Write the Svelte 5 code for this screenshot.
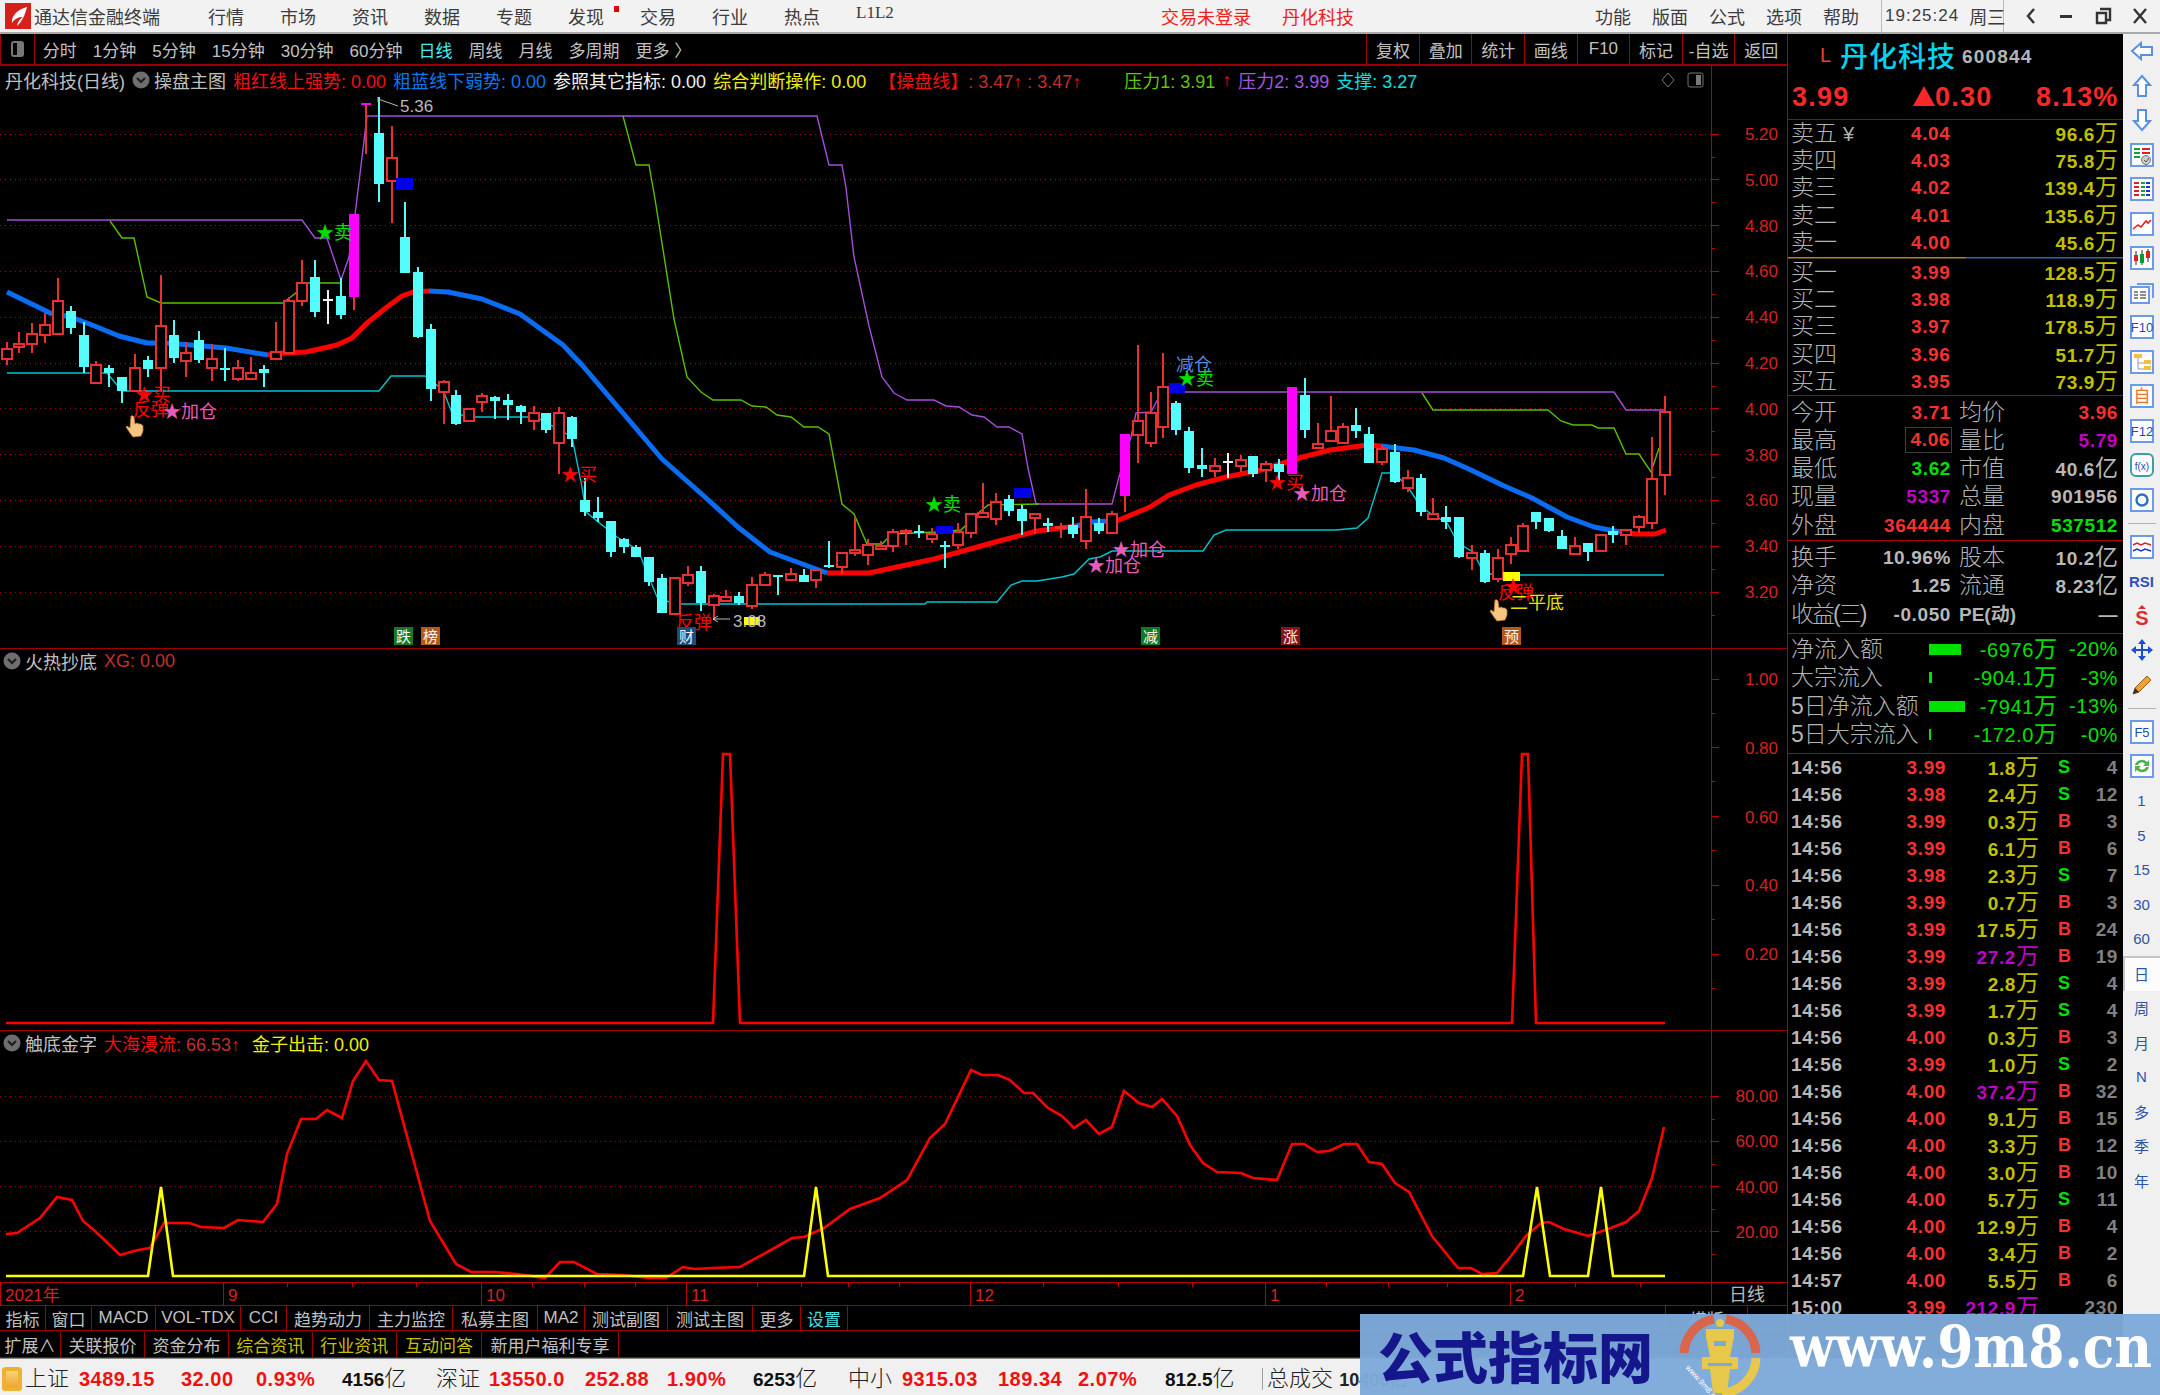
<script>
	const menu = ['行情', '市场', '资讯', '数据', '专题', '发现', '交易', '行业', '热点'];
	const sysMenu = ['功能', '版面', '公式', '选项', '帮助'];
	const periods = ['分时', '1分钟', '5分钟', '15分钟', '30分钟', '60分钟', '日线', '周线', '月线', '多周期', '更多 〉'];
	const tools = ['复权', '叠加', '统计', '画线', 'F10', '标记', '-自选', '返回'];

	const tabsA = [
		['指标', 46], ['窗口', 46], ['MACD', 64], ['VOL-TDX', 85], ['CCI', 46], ['趋势动力', 83], ['主力监控', 83],
		['私募主图', 85], ['MA2', 47], ['测试副图', 83], ['测试主图', 85], ['更多', 48], ['设置', 47]
	];
	const tabsB = [
		['扩展∧', 61, ''], ['关联报价', 84, ''], ['资金分布', 84, ''], ['综合资讯', 83.5, 'gold'],
		['行业资讯', 84.5, 'gold'], ['互动问答', 85, 'gold'], ['新用户福利专享', 137, '']
	];

	// kind, high, body top, body bottom, low (screen y)
	const candles = [
		['r',342,349,359,365],['r',332,344,347,353],['r',323,334,344,353],['r',313,325,335,343],['r',278,301,334,335],
		['c',306,311,328,334],['c',322,335,367,373],['r',361,365,383,384],['c',365,368,373,387],['c',377,377,391,403],
		['r',354,368,391,392],['c',356,360,369,377],['r',275,326,368,392],['c',320,335,358,363],['r',342,353,361,377],
		['c',331,340,360,363],['r',344,359,368,381],['c',348,368,369,381],['r',360,368,379,381],['r',357,373,379,379],
		['c',365,369,373,387],['r',322,352,359,360],['r',297,301,353,353],['r',260,283,301,306],['c',260,277,312,317],
		['w',290,299,300,324],['c',278,296,315,319],['m',214,214,297,310],['t',103,103,104,154],['c',97,133,184,202],
		['r',126,158,181,223],['c',202,237,273,273],['c',267,272,337,338],['c',324,329,389,401],['r',380,382,392,424],
		['c',390,395,424,425],['r',408,409,421,422],['r',393,396,402,412],['c',396,397,401,419],['c',394,400,405,420],
		['c',405,406,412,424],['r',406,413,421,430],['c',413,413,430,433],['r',407,413,443,474],['c',416,417,439,447],
		['c',478,500,512,516],['c',497,512,518,522],['c',521,521,552,557],['c',538,539,547,553],['c',545,547,557,557],
		['c',557,557,582,586],['c',574,578,613,613],['r',578,578,614,614],['r',566,575,583,586],['c',566,571,603,611],
		['r',594,596,605,620],['r',590,597,601,602],['c',592,596,603,605],['r',577,585,606,609],['r',572,575,585,586],
		['c',575,575,577,595],['r',568,574,580,581],['c',569,575,582,582],['r',570,570,580,588],['c',541,565,566,568],
		['r',553,553,567,574],['r',517,550,553,556],['r',539,545,555,565],['r',541,546,549,549],['r',529,532,546,552],
		['r',529,531,532,545],['c',525,531,532,538],['r',528,534,539,543],['c',541,545,546,568],['r',523,532,545,549],
		['r',514,514,533,538],['r',483,513,517,517],['r',493,502,519,525],['c',495,499,511,516],['c',505,509,521,535],
		['r',514,514,518,534],['c',518,523,526,532],['r',523,527,528,538],['c',517,525,534,538],['r',489,517,541,549],
		['c',518,523,531,534],['r',511,514,533,534],['m',434,434,496,512],['r',345,421,435,463],['r',392,413,443,447],
		['r',353,387,427,438],['c',401,403,430,435],['c',427,431,468,473],['c',448,465,469,477],['r',458,466,471,477],
		['w',453,461,462,478],['r',455,460,466,472],['c',456,456,474,477],['r',461,464,470,482],['c',459,464,472,487],
		['m',387,387,474,474],['c',378,395,430,438],['r',423,444,448,449],['r',396,431,441,442],['r',423,427,443,444],
		['c',408,425,431,438],['c',427,434,463,463],['r',445,449,462,465],['c',444,452,482,483],['r',470,478,488,492],
		['c',474,478,512,516],['r',498,514,519,519],['c',506,517,522,529],['c',517,517,557,558],['r',545,553,558,570],
		['c',550,553,582,583],['r',549,558,579,582],['r',537,545,554,564],['r',523,526,551,552],['c',512,512,522,529],
		['c',518,518,531,532],['c',530,536,549,549],['r',537,546,554,555],['c',543,543,552,561],['r',534,535,551,551],
		['c',526,531,535,543],['r',529,530,535,545],['r',515,517,527,533],['r',437,479,523,529],['r',396,412,475,495]
	];
	const candleX = (i) => 6.5 + i * 12.855;

	const maLines = [
		['#0a6cf0', [[7,292],[38,307],[50,313],[71,317],[92,325],[119,336],[147,343],[165,343],[191,345],[226,348],[268,355]]],
		['#ff0000', [[268,355],[283,353],[306,352],[337,345],[352,338],[367,323],[387,307],[402,296],[413,292],[429,291]]],
		['#0a6cf0', [[429,291],[448,292],[482,299],[520,314],[563,345],[582,365],[617,406],[662,459],[705,497],[739,528],[770,552],[816,569],[827,573]]],
		['#ff0000', [[827,573],[869,573],[934,559],[999,541],[1037,531],[1076,526]]],
		['#0a6cf0', [[1076,526],[1092,522],[1110,521]]],
		['#ff0000', [[1110,521],[1119,520],[1150,507],[1169,495],[1196,485],[1226,477],[1261,470],[1299,458],[1330,450],[1368,445],[1381,446]]],
		['#0a6cf0', [[1381,446],[1414,450],[1444,458],[1471,470],[1502,485],[1532,498],[1567,517],[1594,527],[1620,532]]],
		['#ff0000', [[1620,532],[1636,534],[1655,534],[1666,530]]]
	];
	const purpleLine = [[7,220],[302,220],[315,238],[327,238],[341,280],[349,257],[356,207],[367,116],[817,116],[829,165],[842,165],[846,188],[854,257],[869,326],[882,377],[894,393],[907,400],[934,400],[946,406],[959,407],[972,415],[984,417],[997,427],[1009,427],[1022,434],[1028,468],[1036,504],[1112,504],[1119,477],[1131,437],[1136,413],[1151,412],[1159,397],[1168,392],[1614,392],[1626,410],[1664,410]];
	const greenLines = [
		[[110,221],[122,238],[134,238],[147,297],[161,303],[283,303],[297,292],[306,283],[341,283]],
		[[623,116],[636,165],[649,165],[655,199],[674,319],[687,377],[701,392],[713,400],[741,400],[752,406],[766,407],[777,415],[791,417],[804,427],[818,427],[829,434],[842,504],[854,514],[867,544],[882,544],[892,534],[936,532],[961,530],[976,515],[988,505],[1039,504]],
		[[1422,393],[1433,410],[1548,410],[1561,421],[1573,425],[1592,425],[1598,428],[1614,428],[1626,454],[1639,454],[1651,472],[1659,448]]
	];
	const cyanLines = [
		[[7,373],[107,373],[122,391],[379,391],[391,376],[425,376],[443,390],[452,413],[471,417],[536,417],[547,423],[572,437],[582,487],[586,512],[617,537],[638,550],[657,597],[674,604],[925,604],[927,602],[997,602],[1011,585],[1022,581],[1037,581],[1062,577],[1074,574],[1089,559],[1100,557],[1112,551],[1203,551],[1214,535],[1226,530],[1336,530],[1357,528],[1368,518],[1382,473],[1394,473],[1408,487],[1421,507],[1433,515],[1447,523],[1458,543],[1473,552],[1484,573],[1498,575]],
		[[1498,575],[1664,575]]
	];
	const blocks = [
		[396,178,17,12,'#0000e8'],[936,526,17,8,'#0000e8'],[1014,488,17,10,'#0000e8'],[1169,383,16,10,'#0000e8'],
		[1503,572,17,9,'#ffff00'],[744,617,16,8,'#ffff00']
	];
	const marks = [
		[316,233,'★卖','#00e000'],[135,395,'★买','#ff0000'],[133,410,'反弹','#ff0000'],[163,412,'★加仓','#e85cb8'],
		[561,475,'★买','#ff0000'],[925,505,'★卖','#00e000'],[676,623,'反弹','#ff0000'],[1112,550,'★加仓','#e85cb8'],
		[1087,566,'★加仓','#e85cb8'],[1176,365,'减仓','#5a86e0'],[1178,379,'★卖','#00e000'],[1268,483,'★买','#ff0000'],
		[1293,494,'★加仓','#e85cb8'],[1498,593,'反弹','#ff0000'],[1504,587,'★','#ff0000'],[1510,603,'二平底','#e8e000']
	];
	const badges = [
		[394,'跌','#167a2a'],[421,'榜','#b25a1c'],[677,'财','#1c4c7c'],[1141,'减','#0e7a22'],[1281,'涨','#8a1414'],[1502,'预','#b25a1c']
	];

	const mainPrices = ['5.20','5.00','4.80','4.60','4.40','4.20','4.00','3.80','3.60','3.40','3.20'];
	const priceY = (i) => 134 + i * 45.8;
	const volLabels = ['1.00','0.80','0.60','0.40','0.20'];
	const volY = (i) => 678 + i * 68.8;
	const kdLabels = ['80.00','60.00','40.00','20.00'];
	const kdY = (i) => 1095 + i * 45.3;

	const peakLine = [[6,1022],[713,1022],[723,753],[730,753],[740,1022],[1512,1022],[1522,753],[1528,753],[1536,1022],[1665,1022]];
	const redCurve = [[6,1233],[17,1232],[40,1217],[57,1196],[72,1199],[83,1220],[95,1230],[120,1254],[138,1249],[150,1247],[164,1222],[189,1222],[201,1226],[224,1227],[238,1219],[263,1221],[277,1203],[287,1153],[301,1118],[316,1118],[327,1109],[342,1117],[353,1080],[366,1060],[379,1079],[392,1080],[430,1220],[456,1263],[471,1271],[494,1271],[517,1273],[545,1277],[560,1261],[574,1261],[597,1273],[623,1274],[649,1277],[666,1277],[683,1266],[695,1268],[712,1267],[740,1266],[769,1250],[792,1237],[804,1236],[824,1227],[850,1208],[880,1197],[907,1179],[930,1137],[945,1123],[971,1069],[982,1074],[998,1074],[1010,1079],[1024,1092],[1033,1092],[1048,1107],[1062,1115],[1074,1127],[1086,1119],[1099,1133],[1112,1126],[1124,1090],[1139,1102],[1152,1106],[1162,1098],[1177,1115],[1190,1144],[1203,1162],[1217,1171],[1241,1172],[1253,1177],[1277,1179],[1292,1143],[1304,1143],[1317,1151],[1329,1150],[1344,1143],[1357,1143],[1369,1161],[1382,1163],[1395,1182],[1409,1191],[1432,1235],[1458,1267],[1471,1267],[1482,1273],[1497,1272],[1511,1255],[1526,1235],[1541,1222],[1549,1221],[1564,1228],[1588,1235],[1611,1227],[1626,1221],[1639,1210],[1652,1177],[1664,1126]];
	const yellowLine = [[6,1275],[148,1275],[161,1186],[173,1275],[804,1275],[816,1186],[828,1275],[1523,1275],[1537,1186],[1550,1275],[1588,1275],[1601,1186],[1613,1275],[1665,1275]];

	const dates = [['2021年',0],['9',223],['10',481],['11',686],['12',970],['1',1265],['2',1510]];
	const dateTicks = [287,352,416,532,584,635,757,801,848,899,1043,1118,1192,1326,1388,1447,1575,1640];

	const pts = (list) => list.map((p) => p.join(',')).join(' ');

	const sells = [['卖五','4.04','96.6'],['卖四','4.03','75.8'],['卖三','4.02','139.4'],['卖二','4.01','135.6'],['卖一','4.00','45.6']];
	const buys = [['买一','3.99','128.5'],['买二','3.98','118.9'],['买三','3.97','178.5'],['买四','3.96','51.7'],['买五','3.95','73.9']];

	const flows = [['净流入额',32,'-6976','-20%'],['大宗流入',3,'-904.1','-3%'],['5日净流入额',36,'-7941','-13%'],['5日大宗流入',2,'-172.0','-0%']];

	const trades = [
		['14:56','3.99','1.8','S','4'],['14:56','3.98','2.4','S','12'],['14:56','3.99','0.3','B','3'],['14:56','3.99','6.1','B','6'],
		['14:56','3.98','2.3','S','7'],['14:56','3.99','0.7','B','3'],['14:56','3.99','17.5','B','24'],['14:56','3.99','27.2','B','19'],
		['14:56','3.99','2.8','S','4'],['14:56','3.99','1.7','S','4'],['14:56','4.00','0.3','B','3'],['14:56','3.99','1.0','S','2'],
		['14:56','4.00','37.2','B','32'],['14:56','4.00','9.1','B','15'],['14:56','4.00','3.3','B','12'],['14:56','4.00','3.0','B','10'],
		['14:56','4.00','5.7','S','11'],['14:56','4.00','12.9','B','4'],['14:56','4.00','3.4','B','2'],['14:57','4.00','5.5','B','6'],
		['15:00','3.99','212.9','','230']
	];

	const periodKeys = ['1','5','15','30','60','日','周','月','N','多','季','年'];
</script>

{#snippet chevron()}
	<svg class="chevron" width="18" height="18" viewBox="0 0 18 18">
		<circle cx="9" cy="9" r="8.5" fill="#6e6e6e" />
		<path d="M5 7l4 4 4-4" fill="none" stroke="#1c1c1c" stroke-width="2" />
	</svg>
{/snippet}

{#snippet hand(x, y)}
	<g transform="translate({x} {y})">
		<path d="M5 1q2-1 3 1l1 7 2-1 2 1 2 0 2 2 0 5-2 5-8 1-3-4-4-6 1-1 3 2z" fill="#f6c483" stroke="#c07c30" stroke-width=".8" />
	</g>
{/snippet}

{#snippet axisLine(top, bottom)}
	<line x1="1711" x2="1711" y1={top} y2={bottom} class="frame" />
{/snippet}

<div class="screen">
	<header class="titlebar">
		<svg class="logo" width="26" height="26" viewBox="0 0 26 26">
			<rect width="26" height="26" fill="#d8201a" />
			<path d="M22 4C14 6 6 12 7 20c3-5 7-6 11-6-3 2-5 4-6 9 5-4 8-11 10-19z" fill="#fff" />
		</svg>
		<span class="app-name">通达信金融终端</span>
		<nav class="menu">
			{#each menu as item}
				<span class:dot={item === '发现'}>{item}</span>
			{/each}
			<span class="l1l2">L1L2</span>
		</nav>
		<span class="login">交易未登录</span>
		<span class="stock-title">丹化科技</span>
		<nav class="sysmenu">
			{#each sysMenu as item}<span>{item}</span>{/each}
		</nav>
		<div class="clock"><span>19:25:24</span><span class="week">周三</span></div>
		<div class="win">
			<svg width="14" height="20" viewBox="0 0 14 20"><path d="M10 3L4 10l6 7" fill="none" stroke="#333" stroke-width="2.4" /></svg>
			<svg width="16" height="20" viewBox="0 0 16 20"><rect x="2" y="9" width="12" height="3" fill="#333" /></svg>
			<svg width="18" height="20" viewBox="0 0 18 20"><path d="M6 3h10v11h-3M3 7h9v10H3z" fill="none" stroke="#333" stroke-width="2.4" /></svg>
			<svg width="16" height="20" viewBox="0 0 16 20"><path d="M2 3l12 14M14 3L2 17" stroke="#333" stroke-width="2.4" /></svg>
		</div>
	</header>

	<div class="body">
		<section class="left">
			<div class="toolbar">
				<div class="layout-btn"><i></i></div>
				<div class="periods">
					{#each periods as p}
						<span class:active={p === '日线'}>{p}</span>
					{/each}
				</div>
				<div class="tools">
					{#each tools as t}<span>{t}</span>{/each}
				</div>
			</div>

			<div class="pane main">
				<div class="legend">
					<span class="name">丹化科技(日线)</span>
					{@render chevron()}
					<span class="plain">操盘主图</span>
					<span class="red">粗红线上强势: 0.00</span>
					<span class="blue">粗蓝线下弱势: 0.00</span>
					<span class="white">参照其它指标: 0.00</span>
					<span class="yellow">综合判断操作: 0.00</span>
					<span class="red wide">【操盘线】<em>: 3.47<u>↑</u> : 3.47<u>↑</u></em></span>
					<span class="green">压力1: 3.91</span>
					<span class="red"><u>↑</u></span>
					<span class="purple">压力2: 3.99</span>
					<span class="cyan">支撑: 3.27</span>
					<span class="corner">
						<svg width="16" height="18" viewBox="0 0 16 18"><path d="M8 2l6 7-6 7-6-7z" fill="none" stroke="#777" /></svg>
						<svg width="18" height="18" viewBox="0 0 18 18"><rect x="1" y="2" width="15" height="14" rx="2" fill="none" stroke="#777" /><rect x="9" y="4" width="5" height="10" fill="#777" /></svg>
					</span>
				</div>
				<svg class="plot" width="1787" height="582" viewBox="0 66 1787 582">
					{#each mainPrices as p, i}
						<line x1="0" x2="1711" y1={priceY(i)} y2={priceY(i)} class="dots" />
						<line x1="1711" x2="1719" y1={priceY(i)} y2={priceY(i)} class="tick" />
						<line x1="1711" x2="1715" y1={priceY(i) + 23} y2={priceY(i) + 23} class="tick" />
						<text x="1778" y={priceY(i) + 6} class="axis">{p}</text>
					{/each}
					{@render axisLine(66, 648)}

					<polyline points={pts(purpleLine)} class="thin" stroke="#a24fd8" />
					{#each greenLines as line}
						<polyline points={pts(line)} class="thin" stroke="#58c000" />
					{/each}
					{#each cyanLines as line}
						<polyline points={pts(line)} class="thin" stroke="#00c4cc" />
					{/each}
					{#each maLines as [color, line]}
						<polyline points={pts(line)} class="ma" stroke={color} />
					{/each}

					{#each candles as [kind, high, top, bottom, low], i}
						{@const x = Math.round(candleX(i))}
						{#if kind === 'r'}
							<line x1={x} x2={x} y1={high} y2={top} class="wick-red" />
							<line x1={x} x2={x} y1={bottom} y2={low} class="wick-red" />
							<rect x={x - 5} y={top} width="10" height={bottom - top} class="hollow" />
						{:else if kind === 'c'}
							<line x1={x} x2={x} y1={high} y2={low} class="wick-cyan" />
							<rect x={x - 5} y={top} width="10" height={Math.max(bottom - top, 2)} fill="#54fcfc" />
						{:else if kind === 'w'}
							<line x1={x} x2={x} y1={high} y2={low} class="wick-white" />
							<rect x={x - 5} y={top} width="10" height="2" fill="#f0f0f0" />
						{:else if kind === 't'}
							<line x1={x} x2={x} y1={high} y2={low} class="wick-red" />
							<rect x={x - 5} y={top} width="10" height="2" fill="#ff00ff" />
						{:else}
							<line x1={x} x2={x} y1={high} y2={low} class="wick-red" />
							<rect x={x - 5} y={top} width="10" height={bottom - top} fill="#ff00ff" />
						{/if}
					{/each}

					{#each blocks as [x, y, w, h, color]}
						<rect {x} {y} width={w} height={h} fill={color} />
					{/each}

					<path d="M378 97v5M378 99l20 7" class="note-line" />
					<text x="400" y="112" class="note">5.36</text>
					<path d="M713 619h17M713 619l5-3M713 619l5 3" class="note-line" />
					<text x="733" y="627" class="note">3.08</text>

					{#each marks as [x, y, label, color]}
						<text {x} y={y + 6} class="mark" fill={color}>{label}</text>
					{/each}
					{@render hand(126, 415)}
					{@render hand(1490, 599)}

					{#each badges as [x, label, color]}
						<rect {x} y="627" width="19" height="18" fill={color} />
						<text x={x + 9.5} y="642" class="badge">{label}</text>
					{/each}
				</svg>
			</div>

			<div class="pane vol">
				<div class="legend">
					{@render chevron()}
					<span class="plain">火热抄底</span>
					<span class="dimred">XG: 0.00</span>
				</div>
				<svg class="plot" width="1787" height="382" viewBox="0 648 1787 382">
					{#each volLabels as label, i}
						<line x1="1711" x2="1719" y1={volY(i)} y2={volY(i)} class="tick" />
						<line x1="1711" x2="1715" y1={volY(i) + 34} y2={volY(i) + 34} class="tick" />
						<text x="1778" y={volY(i) + 6} class="axis">{label}</text>
					{/each}
					{@render axisLine(648, 1030)}
					<polyline points={pts(peakLine)} class="curve" stroke="#ff0000" />
				</svg>
			</div>

			<div class="pane kd">
				<div class="legend">
					{@render chevron()}
					<span class="plain">触底金字</span>
					<span class="red">大海漫流: <em>66.53</em><u>↑</u></span>
					<span class="yellow yellow-gap">金子出击: 0.00</span>
				</div>
				<svg class="plot" width="1787" height="252" viewBox="0 1030 1787 252">
					{#each kdLabels as label, i}
						<line x1="0" x2="1711" y1={kdY(i)} y2={kdY(i)} class="dots" />
						<line x1="1711" x2="1719" y1={kdY(i)} y2={kdY(i)} class="tick" />
						<line x1="1711" x2="1715" y1={kdY(i) + 23} y2={kdY(i) + 23} class="tick" />
						<text x="1778" y={kdY(i) + 6} class="axis">{label}</text>
					{/each}
					{@render axisLine(1030, 1282)}
					<polyline points={pts(redCurve)} class="curve" stroke="#ff0000" />
					<polyline points={pts(yellowLine)} class="curve" stroke="#ffff00" />
				</svg>
			</div>

			<svg class="dates" width="1787" height="23" viewBox="0 1282 1787 23">
				<line x1="0" x2="1787" y1="1282.5" y2="1282.5" class="frame" />
				{#each dateTicks as x}
					<line x1={x} x2={x} y1="1283" y2="1287" class="tick" />
				{/each}
				{#each dates as [label, x]}
					<line x1={x} x2={x} y1="1283" y2="1305" class="tick" />
					<text x={x + 5} y="1301" class="date">{label}</text>
				{/each}
				<line x1="1711" x2="1711" y1="1283" y2="1305" class="frame" />
				<text x="1729" y="1301" class="date-kind">日线</text>
			</svg>

			<div class="tabrow first">
				{#each tabsA as [label, w]}
					<span style:width="{w}px" class:setting={label === '设置'}>{label}</span>
				{/each}
				<span class="spacer"></span>
				<span class="extra">横版</span>
			</div>
			<div class="tabrow second">
				{#each tabsB as [label, w, tone]}
					<span style:width="{w}px" class={tone}>{label}</span>
				{/each}
			</div>
		</section>

		<aside class="quote">
			<div class="q-name">
				<span class="level">L</span>
				<span class="stock">丹化科技</span>
				<span class="code">600844</span>
			</div>
			<div class="q-price">
				<span class="now">3.99</span>
				<span class="delta"><i></i>0.30</span>
				<span class="pct">8.13%</span>
			</div>

			<div class="book">
				{#each sells as [label, price, vol]}
					<div class="book-row">
						<span class="lbl">{label}{#if label === '卖五'}<small>¥</small>{/if}</span>
						<span class="num up">{price}</span>
						<span class="num vol-num">{vol}<b>万</b></span>
					</div>
				{/each}
				<div class="book-split"></div>
				{#each buys as [label, price, vol]}
					<div class="book-row">
						<span class="lbl">{label}</span>
						<span class="num up">{price}</span>
						<span class="num vol-num">{vol}<b>万</b></span>
					</div>
				{/each}
			</div>

			<div class="info first">
				<div class="info-row"><span class="lbl">今开</span><span class="num up">3.71</span><span class="lbl l2">均价</span><span class="num up">3.96</span></div>
				<div class="info-row"><span class="lbl">最高</span><span class="num up"><i class="boxed">4.06</i></span><span class="lbl l2">量比</span><span class="num violet">5.79</span></div>
				<div class="info-row"><span class="lbl">最低</span><span class="num down">3.62</span><span class="lbl l2">市值</span><span class="num grey">40.6<b>亿</b></span></div>
				<div class="info-row"><span class="lbl">现量</span><span class="num violet">5337</span><span class="lbl l2">总量</span><span class="num grey">901956</span></div>
				<div class="info-row"><span class="lbl">外盘</span><span class="num up">364444</span><span class="lbl l2">内盘</span><span class="num down">537512</span></div>
			</div>
			<div class="info second">
				<div class="info-row"><span class="lbl">换手</span><span class="num grey">10.96%</span><span class="lbl l2">股本</span><span class="num grey">10.2<b>亿</b></span></div>
				<div class="info-row"><span class="lbl">净资</span><span class="num grey">1.25</span><span class="lbl l2">流通</span><span class="num grey">8.23<b>亿</b></span></div>
				<div class="info-row"><span class="lbl tight">收益(三)</span><span class="num grey">-0.050</span><span class="lbl l2 pe">PE(动)</span><span class="num grey">—</span></div>
			</div>

			<div class="flows">
				{#each flows as [label, w, value, pct]}
					<div class="flow-row">
						<span class="lbl">{label}</span>
						<span class="bar-cell"><i class="bar" style:width="{w}px"></i></span>
						<span class="num down">{value}<b>万</b></span>
						<span class="num down">{pct}</span>
					</div>
				{/each}
			</div>

			<div class="trades">
				{#each trades as [time, price, vol, side, count]}
					<div class="trade-row">
						<span class="num grey">{time}</span>
						<span class="num up">{price}</span>
						<span class="num vol-num" class:big={parseFloat(vol) > 25}>{vol}<b>万</b></span>
						<span class="bs" class:sell={side === 'S'}>{side}</span>
						<span class="num dimgrey">{count}</span>
					</div>
				{/each}
			</div>
		</aside>

		<aside class="side">
			<div class="sb"><svg viewBox="0 0 24 24"><path d="M2 12l9-8v4h11v8H11v4z" class="arrow" /></svg></div>
			<div class="sb"><svg viewBox="0 0 24 24"><path d="M12 2l8 9h-4v11H8V11H4z" class="arrow" /></svg></div>
			<div class="sb"><svg viewBox="0 0 24 24"><path d="M12 22l8-9h-4V2H8v11H4z" class="arrow" /></svg></div>
			<div class="sb"><svg viewBox="0 0 24 24"><rect x="1" y="1" width="22" height="22" class="box" /><path d="M4 6h6M4 10h6M4 14h6" stroke="#1a9c3a" stroke-width="2" /><path d="M12 6h8M12 10h8" stroke="#e02020" stroke-width="2" /><circle cx="16" cy="17" r="4.5" fill="#ccc" stroke="#777" /><path d="M14 17l2 2 3-4" fill="none" stroke="#555" /></svg></div>
			<div class="sb"><svg viewBox="0 0 24 24"><rect x="1" y="1" width="22" height="22" class="box" /><path d="M4 6h5M4 10h5M4 14h5M4 18h5" stroke="#e02020" stroke-width="2" /><path d="M11 6h4M11 10h4M11 14h4M11 18h4" stroke="#1a9c3a" stroke-width="2" /><path d="M16 6h4M16 10h4M16 14h4M16 18h4" stroke="#2030d0" stroke-width="2" /></svg></div>
			<div class="sb"><svg viewBox="0 0 24 24"><rect x="1" y="1" width="22" height="22" class="box" /><path d="M3 17l5-4 3 2 5-6 2 2 3-3" fill="none" stroke="#e02020" stroke-width="1.6" /></svg></div>
			<div class="sb"><svg viewBox="0 0 24 24"><rect x="1" y="1" width="22" height="22" class="box" /><path d="M6 5v14M12 4v15M18 3v13" stroke="#222" /><rect x="4" y="9" width="4" height="6" fill="#e02020" /><rect x="10" y="8" width="4" height="9" fill="#0a9c2a" /><rect x="16" y="5" width="4" height="7" fill="#e02020" /></svg></div>
			<div class="sb"><svg viewBox="0 0 24 24"><path d="M7 3h16v14" fill="none" stroke="#6a9ae8" stroke-width="2" /><rect x="1" y="6" width="18" height="16" class="box" /><path d="M4 11h4M10 11h6M4 14h4M10 14h6M4 17h4M10 17h6" stroke="#666" stroke-width="1.4" /></svg></div>
			<div class="sb"><svg viewBox="0 0 24 24"><rect x="1" y="1" width="22" height="22" class="box" /><text x="12" y="17" class="ico-text">F10</text></svg></div>
			<div class="sb"><svg viewBox="0 0 24 24"><rect x="1" y="1" width="22" height="22" class="box" /><path d="M8 8v11h6M8 13h6" fill="none" stroke="#999" /><rect x="4" y="4" width="8" height="4" fill="#f0c040" /><rect x="14" y="10" width="7" height="4" fill="#f0c040" /><rect x="14" y="16" width="7" height="4" fill="#f0c040" /></svg></div>
			<div class="sb"><svg viewBox="0 0 24 24"><rect x="1" y="1" width="22" height="22" class="box" /><text x="12" y="18" class="ico-text cn">自</text></svg></div>
			<div class="sb"><svg viewBox="0 0 24 24"><rect x="1" y="1" width="22" height="22" class="box" /><text x="12" y="17" class="ico-text">F12</text></svg></div>
			<div class="sb"><svg viewBox="0 0 24 24"><rect x="1" y="1" width="22" height="22" rx="5" fill="#fff" stroke="#3aa0a0" stroke-width="2" /><text x="12" y="17" class="ico-text fx">f(x)</text></svg></div>
			<div class="sb"><svg viewBox="0 0 24 24"><rect x="1" y="1" width="22" height="22" class="box" /><circle cx="12" cy="12" r="5.5" fill="none" stroke="#2a70c0" stroke-width="2.4" /></svg></div>
			<div class="sep"></div>
			<div class="sb"><svg viewBox="0 0 24 24"><rect x="1" y="1" width="22" height="22" class="box" /><path d="M3 10l4-2 4 2 4-2 6 2" fill="none" stroke="#e02020" stroke-width="1.4" /><path d="M3 16l4-2 4 2 4-2 6 2" fill="none" stroke="#2030d0" stroke-width="1.4" /></svg></div>
			<div class="sb rsi">RSI</div>
			<div class="sb"><svg viewBox="0 0 24 24"><path d="M12 1l4 4H8z" fill="#d83030" /><text x="12" y="21" class="ico-text s">S</text></svg></div>
			<div class="sb"><svg viewBox="0 0 24 24"><path d="M12 1l4 5h-3v5h5V8l5 4-5 4v-3h-5v5h3l-4 5-4-5h3v-5H6v3l-5-4 5-4v3h5V6H8z" fill="#1a50d0" /></svg></div>
			<div class="sb"><svg viewBox="0 0 24 24"><path d="M3 21l2-6L17 3l4 4L9 19z" fill="#f0a030" stroke="#906020" /><path d="M3 21l2-6 4 4z" fill="#333" /></svg></div>
			<div class="sep"></div>
			<div class="sb"><svg viewBox="0 0 24 24"><rect x="1" y="1" width="22" height="22" class="box" /><text x="12" y="17" class="ico-text">F5</text></svg></div>
			<div class="sb"><svg viewBox="0 0 24 24"><rect x="1" y="1" width="22" height="22" class="box" /><path d="M5 11a7 7 0 0 1 12-3l2-2v6h-6l2-2a4 4 0 0 0-7 1zM19 13a7 7 0 0 1-12 3l-2 2v-6h6l-2 2a4 4 0 0 0 7-1z" fill="#50b050" /></svg></div>
			{#each periodKeys as key}
				<div class="sb key" class:on={key === '日'}>{key}</div>
			{/each}
		</aside>
	</div>

	<footer class="status">
		<span class="coin"></span>
		<span class="idx">上证</span><span class="up-t">3489.15</span><span class="up-t">32.00</span><span class="up-t">0.93%</span><span class="amt">4156<b>亿</b></span>
		<span class="idx">深证</span><span class="up-t">13550.0</span><span class="up-t">252.88</span><span class="up-t">1.90%</span><span class="amt">6253<b>亿</b></span>
		<span class="idx">中小</span><span class="up-t">9315.03</span><span class="up-t">189.34</span><span class="up-t">2.07%</span><span class="amt">812.5<b>亿</b></span>
		<span class="idx total">总成交 <em>10405亿</em></span>
	</footer>

	<div class="watermark">
		<span class="wm-title">公式指标网</span>
		<svg class="wm-logo" width="84" height="84" viewBox="0 0 84 84">
			<path d="M36 6A36 36 0 0 0 6 40" fill="none" stroke="#d8654c" stroke-width="9" />
			<path d="M48 6A36 36 0 0 1 78 40" fill="none" stroke="#d8654c" stroke-width="9" />
			<path d="M78 45A36 36 0 0 1 44 80" fill="none" stroke="#e8c84c" stroke-width="9" />
			<circle cx="42" cy="10" r="4" fill="#e8c84c" />
			<path d="M28 16h28v8l-4 20h8v12H52l-3 24H35l-3-24H24V44h8l-4-20z" fill="#e8c84c" />
			<path d="M36 28h12v5H36zM30 50h24v3H30z" fill="#7eaad9" />
			<text x="6" y="58" class="wm-small" transform="rotate(48 10 58)">www.9m8.cn</text>
		</svg>
		<span class="wm-url">www.9m8.cn</span>
	</div>
</div>

<style>
	:global(body) {
		margin: 0;
		background: #000;
	}

	.screen {
		position: relative;
		display: flex;
		flex-direction: column;
		width: 2160px;
		height: 1395px;
		overflow: hidden;
		background: #000;
		color: #c0c0c0;
		font-family: 'Liberation Sans', 'Noto Sans CJK SC', sans-serif;
		font-size: 18px;
	}

	/* title bar */
	.titlebar {
		display: flex;
		align-items: center;
		flex: none;
		height: 32px;
		padding-left: 5px;
		background: #f2f2f2;
		border-bottom: 2px solid #a8a8a8;
		color: #3c3c3c;
		white-space: nowrap;
	}

	.logo {
		flex: none;
	}

	.app-name {
		width: 174px;
		margin-left: 3px;
	}

	.menu {
		display: flex;
		gap: 36px;
		width: 953px;
	}

	.menu .dot {
		position: relative;
	}

	.menu .dot::after {
		content: '';
		position: absolute;
		top: 3px;
		left: 46px;
		width: 5px;
		height: 6px;
		background: #e00000;
	}

	.l1l2 {
		font-family: 'Liberation Serif', serif;
		font-size: 17px;
	}

	.login {
		width: 121px;
		color: #f02020;
	}

	.stock-title {
		width: 313px;
		color: #f02020;
	}

	.sysmenu {
		display: flex;
		gap: 21px;
		width: 286px;
	}

	.clock {
		display: flex;
		align-items: center;
		gap: 10px;
		width: 118px;
		height: 32px;
		padding-left: 3px;
		border-left: 1px solid #bbb;
		border-right: 1px solid #bbb;
	}

	.clock span:first-child {
		font-size: 17px;
		letter-spacing: 1px;
	}

	.win {
		display: flex;
		align-items: center;
		gap: 20px;
		margin-left: 20px;
	}

	/* body */
	.body {
		display: flex;
		flex: none;
		height: 1324px;
	}

	.left {
		display: flex;
		flex-direction: column;
		width: 1787px;
		flex: none;
	}

	.toolbar {
		display: flex;
		align-items: center;
		flex: none;
		height: 30px;
		border-bottom: 2px solid #a00000;
		font-size: 17px;
		white-space: nowrap;
	}

	.layout-btn {
		display: flex;
		align-items: center;
		justify-content: center;
		width: 33px;
		height: 30px;
		border: solid #a00000;
		border-width: 0 1px 0 1px;
	}

	.layout-btn i {
		display: block;
		width: 13px;
		height: 16px;
		border: 2px solid #777;
		border-radius: 3px;
		box-sizing: border-box;
		background: linear-gradient(90deg, #000 45%, #777 45%);
	}

	.periods {
		display: flex;
		gap: 16px;
		width: 1331px;
		margin-left: 8px;
	}

	.periods .active {
		color: #40f0f0;
	}

	.tools {
		display: flex;
		height: 30px;
	}

	.tools span {
		display: flex;
		align-items: center;
		justify-content: center;
		width: 51.6px;
		border-left: 1px solid #a00000;
	}

	.pane {
		position: relative;
		flex: none;
	}

	.pane.main {
		height: 582px;
	}

	.pane.vol {
		height: 382px;
		border-top: 1px solid #a00000;
		box-sizing: border-box;
	}

	.pane.kd {
		height: 252px;
		border-top: 1px solid #a00000;
		box-sizing: border-box;
	}

	.plot,
	.dates {
		display: block;
	}

	.legend {
		position: absolute;
		top: 3px;
		left: 5px;
		right: 76px;
		z-index: 1;
		display: flex;
		align-items: center;
		gap: 7px;
		height: 22px;
		white-space: nowrap;
		color: #c0c0c0;
	}

	.vol .legend,
	.kd .legend {
		top: 1px;
		left: 3px;
	}

	.legend u {
		font-weight: 700;
		text-decoration: none;
		color: #f01010;
	}

	.chevron {
		flex: none;
	}

	.plain {
		margin-left: -3px;
	}

	.red {
		color: #f01010;
	}

	.red em,
	.dimred {
		color: #c03030;
		font-style: normal;
	}

	.blue {
		color: #0878f0;
	}

	.white {
		color: #f0f0f0;
	}

	.yellow {
		color: #f0f000;
	}

	.green {
		color: #60c800;
	}

	.purple {
		color: #a458e0;
	}

	.cyan {
		color: #00e0e0;
	}

	.wide {
		margin-left: 5px;
		width: 239px;
	}

	.yellow-gap {
		margin-left: 5px;
	}

	.corner {
		display: flex;
		align-items: center;
		gap: 11px;
		margin-left: auto;
		margin-right: 6px;
	}

	/* chart shapes */
	.frame {
		stroke: #b00000;
		stroke-width: 1;
		shape-rendering: crispEdges;
	}

	.tick {
		stroke: #c00000;
		stroke-width: 1;
		shape-rendering: crispEdges;
	}

	.dots {
		stroke: #b00000;
		stroke-width: 1;
		stroke-dasharray: 1 4;
		shape-rendering: crispEdges;
	}

	.axis {
		fill: #d82020;
		font-size: 17px;
		text-anchor: end;
	}

	.thin {
		fill: none;
		stroke-width: 1.4;
	}

	.ma {
		fill: none;
		stroke-width: 5;
		stroke-linejoin: round;
	}

	.curve {
		fill: none;
		stroke-width: 2.6;
		stroke-linejoin: miter;
	}

	.wick-red {
		stroke: #e83030;
		stroke-width: 1.3;
		shape-rendering: crispEdges;
	}

	.wick-cyan {
		stroke: #54fcfc;
		stroke-width: 1.3;
		shape-rendering: crispEdges;
	}

	.wick-white {
		stroke: #f0f0f0;
		stroke-width: 1.3;
		shape-rendering: crispEdges;
	}

	.hollow {
		fill: #000;
		stroke: #e83030;
		stroke-width: 1.3;
		shape-rendering: crispEdges;
	}

	.note {
		fill: #b8b8b8;
		font-size: 17px;
	}

	.note-line {
		fill: none;
		stroke: #b8b8b8;
		stroke-width: 1;
	}

	.mark {
		font-size: 18px;
	}

	.badge {
		fill: #f4f4f4;
		font-size: 15px;
		text-anchor: middle;
	}

	.date {
		fill: #d82020;
		font-size: 17px;
	}

	.date-kind {
		fill: #b8b8b8;
		font-size: 18px;
	}

	/* bottom tabs */
	.tabrow {
		display: flex;
		flex: none;
		height: 26px;
		box-sizing: border-box;
		border-bottom: 1px solid #a00000;
		font-size: 17px;
		white-space: nowrap;
	}

	.tabrow.first {
		border-top: 1px solid #a00000;
	}

	.tabrow.second {
		height: 27px;
		padding-top: 1px;
	}

	.tabrow span {
		display: flex;
		align-items: center;
		justify-content: center;
		box-sizing: border-box;
		border-right: 1px solid #a00000;
		overflow: hidden;
	}

	.tabrow .setting {
		color: #40e0e0;
	}

	.tabrow .gold {
		color: #c8c000;
	}

	.tabrow .spacer {
		width: 818px;
	}

	.tabrow .extra {
		width: 82px;
	}

	/* quote panel */
	.quote {
		display: flex;
		flex-direction: column;
		flex: none;
		width: 336px;
		box-sizing: border-box;
		padding: 0 5px 0 3px;
		border-left: 1px solid #b00000;
		overflow: hidden;
		white-space: nowrap;
		position: relative;
	}

	.q-name {
		display: flex;
		align-items: center;
		height: 42px;
		margin-left: 29px;
	}

	.level {
		color: #e84030;
		font-size: 20px;
		width: 20px;
	}

	.stock {
		color: #00d4f0;
		font-size: 28px;
		letter-spacing: 1px;
		font-weight: 500;
	}

	.code {
		margin: 4px 0 0 6px;
		color: #b4b4b4;
		font-size: 19px;
		font-weight: 700;
		letter-spacing: 1.2px;
	}

	.q-price {
		display: grid;
		grid-template-columns: 121px 123px 1fr;
		align-items: center;
		height: 43px;
		margin: 0 -5px 0 -3px;
		padding: 0 5px 0 4px;
		border-bottom: 1px solid #b00000;
		color: #f82828;
		font-size: 27px;
		font-weight: 700;
		letter-spacing: 1.2px;
	}

	.q-price .pct {
		text-align: right;
	}

	.delta i {
		display: inline-block;
		width: 0;
		height: 0;
		border: solid transparent;
		border-width: 0 11px 20px;
		border-bottom-color: #f82828;
	}

	.num {
		font-weight: 700;
		font-size: 19px;
		line-height: 1;
		letter-spacing: 0.6px;
		text-align: right;
	}

	.num b {
		font-size: 23px;
		font-weight: 400;
		line-height: 1;
		letter-spacing: 0;
	}

	.lbl {
		color: #b4b4b4;
		font-size: 23px;
		font-weight: 300;
		line-height: 1;
	}

	.lbl small {
		margin-left: 6px;
		font-size: 20px;
		font-weight: 400;
	}

	.tight {
		letter-spacing: -2px;
	}

	.pe {
		font-size: 19px;
		font-weight: 700;
		letter-spacing: 0;
	}

	.up {
		color: #f83030;
	}

	.down {
		color: #00e000;
	}

	.violet {
		color: #c000c8;
	}

	.grey {
		color: #b8b8b8;
	}

	.dimgrey {
		color: #808080;
	}

	.book {
		display: flex;
		flex-direction: column;
		margin: 0 -5px 0 -3px;
		padding: 0 5px 0 3px;
		border-bottom: 1px solid #b00000;
	}

	.book-row {
		display: grid;
		grid-template-columns: 120px 42px 1fr;
		align-items: center;
		height: 27.2px;
	}

	.book-row .up {
		text-align: left;
	}

	.vol-num {
		color: #c0c000;
	}

	.vol-num.big {
		color: #c000c8;
	}

	.book-split {
		height: 3px;
		margin: 0 -5px 0 -3px;
		background: linear-gradient(90deg, #b0802c 53%, #2a6aa8 53%) center / 100% 1.5px no-repeat;
	}

	.info {
		margin: 0 -5px 0 -3px;
		padding: 2px 5px 1px 3px;
		border-bottom: 1px solid #b00000;
	}

	.info.second {
		padding-bottom: 5px;
	}

	.info-row {
		display: grid;
		grid-template-columns: 60px 100px 80px 1fr;
		align-items: center;
		height: 28.3px;
	}

	.l2 {
		padding-left: 8px;
	}

	.boxed {
		display: inline-block;
		padding: 0 1px 0 5px;
		outline: 1px solid #3c3c3c;
		font-style: normal;
		line-height: 24px;
	}

	.flows {
		margin: 0 -5px 0 -3px;
		padding: 1px 5px 4px 3px;
		border-bottom: 1px solid #b00000;
	}

	.flow-row {
		display: grid;
		grid-template-columns: 138px 40px 88px 1fr;
		align-items: center;
		height: 28.4px;
	}

	.flow-row .down {
		font-weight: 400;
		font-size: 20px;
	}

	.bar-cell {
		display: flex;
		align-items: center;
	}

	.bar {
		display: block;
		height: 11px;
		background: #00e000;
	}

	.trade-row {
		display: grid;
		grid-template-columns: 80px 75px 93px 34px 1fr;
		align-items: center;
		height: 27px;
	}

	.trade-row .grey {
		text-align: left;
	}

	.bs {
		padding-left: 19px;
		color: #f83030;
		font-weight: 700;
		line-height: 1;
	}

	.bs.sell {
		color: #00e000;
	}

	/* right sidebar */
	.side {
		flex: 1;
		display: flex;
		flex-direction: column;
		align-items: center;
		background: #f0f0f0;
	}

	.sb {
		display: flex;
		align-items: center;
		justify-content: center;
		width: 37px;
		height: 34.5px;
		flex: none;
	}

	.sb svg {
		width: 24px;
		height: 24px;
	}

	.arrow {
		fill: #fff;
		stroke: #5a90e4;
		stroke-width: 2;
	}

	.box {
		fill: #fff;
		stroke: #6a9ae8;
		stroke-width: 2;
	}

	.ico-text {
		fill: #1c4cb4;
		font-size: 13px;
		text-anchor: middle;
	}

	.ico-text.cn {
		fill: #f07030;
		font-size: 17px;
	}

	.ico-text.fx {
		font-size: 10px;
	}

	.ico-text.s {
		fill: #d83030;
		font-size: 20px;
		font-weight: 700;
	}

	.rsi {
		color: #3050c0;
		font-size: 15px;
		font-weight: 700;
	}

	.key {
		color: #2c54a8;
		font-size: 15px;
	}

	.key.on {
		background: #fcfcfc;
		box-shadow: inset 2px 2px 0 #c4c4c4;
	}

	.sep {
		flex: none;
		width: 28px;
		height: 12.5px;
		background: linear-gradient(#b4b4b4, #b4b4b4) center / 100% 1px no-repeat;
	}

	/* status bar */
	.status {
		display: grid;
		grid-template-columns: 25px 54px 102px 75px 86px 94px 53px 96px 82px 86px 95px 54px 96px 80px 87px 97px 1fr;
		align-items: center;
		height: 37px;
		padding-top: 4px;
		border-top: 1px solid #8a8a8a;
		box-sizing: border-box;
		background: #f0f0f0;
		color: #111;
		white-space: nowrap;
	}

	.coin {
		display: block;
		width: 20px;
		height: 24px;
		margin-left: 2px;
		border-radius: 4px;
		background: linear-gradient(#fce08a, #e89a20);
		box-shadow: inset 0 0 0 4px #f0b030;
	}

	.idx {
		font-size: 22px;
		font-weight: 300;
		line-height: 1;
		color: #222;
	}

	.up-t {
		color: #f01010;
		font-size: 20px;
		line-height: 1;
		font-weight: 700;
		letter-spacing: 0.5px;
	}

	.amt {
		font-size: 19px;
		font-weight: 700;
		line-height: 1;
	}

	.amt b {
		font-size: 22px;
		font-weight: 300;
		line-height: 1;
	}

	.total {
		padding-left: 4px;
		border-left: 1px solid #a0a0a0;
	}

	.total em {
		font-style: normal;
		font-size: 18px;
		font-weight: 700;
	}

	/* site stamp over the bottom right corner */
	.watermark {
		position: absolute;
		left: 1360px;
		top: 1314px;
		right: 0;
		bottom: 0;
		display: flex;
		align-items: center;
		background: rgba(126, 170, 217, 0.97);
		white-space: nowrap;
	}

	.wm-title {
		margin-left: 18px;
		color: #16168c;
		font-family: 'Noto Sans CJK SC', sans-serif;
		font-size: 55px;
		font-weight: 900;
		line-height: 1;
	}

	.wm-logo {
		flex: none;
		margin-left: 25px;
	}

	.wm-small {
		fill: #fff;
		font-size: 8px;
	}

	.wm-url {
		margin-left: 28px;
		margin-top: -16px;
		color: #fff;
		font-family: 'DejaVu Serif', serif;
		font-size: 50px;
		font-weight: 700;
		line-height: 1;
		transform: scale(1.04, 1.15);
		transform-origin: left center;
	}
</style>
